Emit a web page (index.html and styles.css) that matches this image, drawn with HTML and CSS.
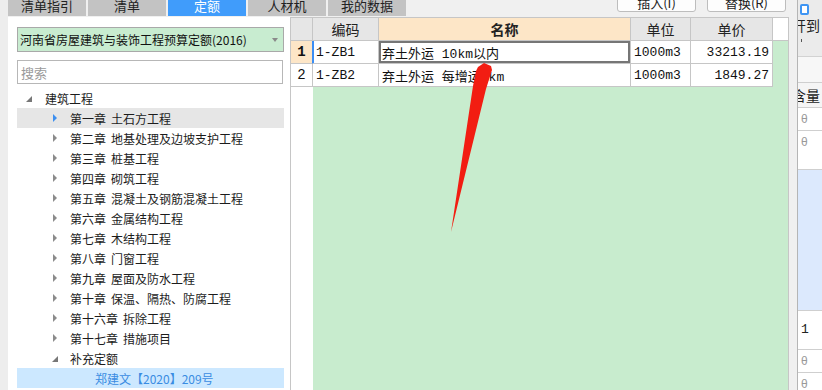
FILE: index.html
```html
<!DOCTYPE html>
<html lang="zh-CN">
<head>
    <meta charset="UTF-8">
    <meta name="viewport" content="width=device-width, initial-scale=1.0">
    <title>定额</title>
    <link rel="stylesheet" href="styles.css">
</head>
<body>

<div class="app">
    <div class="edge"></div>
    <div class="center">
        <div class="topbar">
            <div class="tabs">
                <div class="tab">清单指引</div>
                <div class="tab">清单</div>
                <div class="tab active">定额</div>
                <div class="tab">人材机</div>
                <div class="tab">我的数据</div>
            </div>
            <div class="actions">
                <button class="btn">插入(I)</button>
                <button class="btn">替换(R)</button>
            </div>
        </div>
        <div class="body">
            <div class="left-panel">
                <div class="select">
                    <span>河南省房屋建筑与装饰工程预算定额(2016)</span>
                    <span class="caret"></span>
                </div>
                <input class="search" type="text" placeholder="搜索">
                <ul class="tree">
                    <li class="lvl0"><i class="tri open"></i>建筑工程</li>
                    <li class="lvl1 sel"><i class="tri blue"></i><span class="no">第一章</span>土石方工程</li>
                    <li class="lvl1"><i class="tri"></i><span class="no">第二章</span>地基处理及边坡支护工程</li>
                    <li class="lvl1"><i class="tri"></i><span class="no">第三章</span>桩基工程</li>
                    <li class="lvl1"><i class="tri"></i><span class="no">第四章</span>砌筑工程</li>
                    <li class="lvl1"><i class="tri"></i><span class="no">第五章</span>混凝土及钢筋混凝土工程</li>
                    <li class="lvl1"><i class="tri"></i><span class="no">第六章</span>金属结构工程</li>
                    <li class="lvl1"><i class="tri"></i><span class="no">第七章</span>木结构工程</li>
                    <li class="lvl1"><i class="tri"></i><span class="no">第八章</span>门窗工程</li>
                    <li class="lvl1"><i class="tri"></i><span class="no">第九章</span>屋面及防水工程</li>
                    <li class="lvl1"><i class="tri"></i><span class="no">第十章</span>保温、隔热、防腐工程</li>
                    <li class="lvl1"><i class="tri"></i><span class="no">第十六章</span>拆除工程</li>
                    <li class="lvl1"><i class="tri"></i><span class="no">第十七章</span>措施项目</li>
                    <li class="lvl1"><i class="tri open"></i>补充定额</li>
                    <li class="lvl2 cur">郑建文【2020】209号</li>
                </ul>
            </div>

            <div class="grid">
                <table>
                    <thead>
                        <tr>
                            <th class="c-no"></th>
                            <th class="c-code">编码</th>
                            <th class="c-name hl">名称</th>
                            <th class="c-unit">单位</th>
                            <th class="c-price">单价</th>
                            <th class="c-end"></th>
                        </tr>
                    </thead>
                    <tbody>
                        <tr>
                            <td class="c-no hl active-row">1</td>
                            <td class="focus">1-ZB1</td>
                            <td class="picked">弃土外运 10km以内</td>
                            <td>1000m3</td>
                            <td class="num">33213.19</td>
                            <td class="c-end"></td>
                        </tr>
                        <tr>
                            <td class="c-no">2</td>
                            <td>1-ZB2</td>
                            <td>弃土外运 每增运1km</td>
                            <td>1000m3</td>
                            <td class="num">1849.27</td>
                            <td class="c-end"></td>
                        </tr>
                    </tbody>
                </table>
                <div class="filler">
                    <div class="gutter"></div>
                    <div class="blank"></div>
                </div>
            </div>
            <div class="splitter"></div>
        </div>
    </div>

    <div class="side">
        <div class="side-top">
            <span class="side-icon"></span>
            <span class="side-label">开到</span>
            <span class="side-tick"></span>
        </div>
        <div class="side-row h26"></div>
        <div class="side-row head"><span class="cut">含量</span></div>
        <div class="side-row h23 theta">θ</div>
        <div class="side-row h39 theta">θ</div>
        <div class="side-row h141 blue"></div>
        <div class="side-row h39 one">1</div>
        <div class="side-row h23 theta">θ</div>
        <div class="side-row h23 theta">θ</div>
    </div>

    <svg class="arrow" width="822" height="390" viewBox="0 0 822 390">
        <polygon points="478,67 484,63 491,66 492,70 486,89 451,232 473,86 476,71" fill="#f21d12"/>
    </svg>
</div>

</body>
</html>
```

FILE: styles.css
```css
body {
    margin: 0;
    padding: 0;
    font-family: "Noto Sans CJK SC", "Noto Sans", sans-serif;
    font-size: 12px;
    color: #1f1f1f;
    background-color: #f0f0f0;
    overflow: hidden;
}
.app {
    display: flex;
    height: 390px;
    position: relative;
}
.edge {
    width: 8px;
    background-color: #ededed;
}
.center {
    width: 789px;
    display: flex;
    flex-direction: column;
}

/* top bar */
.topbar {
    height: 17px;
    display: flex;
    background-color: #f0f0f0;
}
.tabs {
    display: flex;
    gap: 2px;
    height: 16px;
}
.tab {
    width: 78px;
    height: 16px;
    background-color: #c3c3c3;
    text-align: center;
    font-size: 13px;
    line-height: 11px;
    color: #222;
    overflow: hidden;
}
.tab.active {
    background-color: #409cfb;
    color: #fff;
}
.actions {
    margin-left: auto;
    padding-right: 11px;
    display: flex;
    gap: 11px;
    align-items: flex-start;
}
.btn {
    width: 79px;
    height: 20px;
    margin-top: -8px;
    padding: 0;
    border: 1px solid #bdbdbd;
    border-radius: 3px;
    background-color: #fdfdfd;
    font-family: inherit;
    font-size: 13px;
    line-height: 13px;
    color: #222;
}

.body {
    flex: 1;
    display: flex;
}

/* left panel */
.left-panel {
    width: 282px;
    box-sizing: border-box;
    padding: 10px 6px 0 9px;
    background-color: #fff;
}
.select {
    height: 25px;
    box-sizing: border-box;
    border: 1px solid #a9a9a9;
    background-color: #c8ecd0;
    display: flex;
    align-items: center;
    justify-content: space-between;
    padding: 0 5px 0 2px;
    font-size: 12px;
    color: #111;
}
.caret {
    width: 0;
    height: 0;
    border-left: 3px solid transparent;
    border-right: 3px solid transparent;
    border-top: 4px solid #8a8a8a;
}
.search {
    display: block;
    margin-top: 8px;
    width: 266px;
    height: 24px;
    box-sizing: border-box;
    border: 1px solid #b7b7b7;
    padding: 0 3px;
    font-family: inherit;
    font-size: 13px;
    outline: none;
}
.search::placeholder {
    color: #9a9a9a;
}
.tree {
    list-style: none;
    margin: 4px 0 0;
    padding: 0;
}
.tree li {
    height: 20px;
    display: flex;
    align-items: center;
    font-size: 12px;
    color: #1c1c1c;
    white-space: nowrap;
}
.tree .lvl0 {
    padding-left: 9px;
}
.tree .lvl1 {
    padding-left: 35px;
}
.tree .lvl2 {
    padding-left: 78px;
}
.tree .lvl0 .tri {
    width: 19px;
}
.tree .lvl1 .tri {
    width: 18px;
}
.tri {
    display: block;
    height: 20px;
    position: relative;
}
.tri::before {
    content: "";
    position: absolute;
    left: 1px;
    top: 6px;
    border-left: 4px solid #8c8c8c;
    border-top: 4px solid transparent;
    border-bottom: 4px solid transparent;
}
.tri.blue::before {
    border-left-color: #3d8ff0;
}
.tri.open::before {
    left: 0;
    top: 8px;
    border-left: 6px solid transparent;
    border-top: 0;
    border-bottom: 6px solid #777;
}
.tree .no {
    margin-right: 5px;
}
.tree .sel {
    background-color: #e6e6e6;
}
.tree .cur {
    background-color: #cce8ff;
    color: #3a8ce2;
}

/* grid */
.grid {
    width: 499px;
    box-sizing: border-box;
    border-left: 1px solid #c6c6c6;
    border-right: 1px solid #c6c6c6;
    display: flex;
    flex-direction: column;
    background-color: #fff;
}
.grid table {
    border-collapse: separate;
    border-spacing: 0;
    table-layout: fixed;
    width: 497px;
}
.grid th,
.grid td {
    box-sizing: border-box;
    border-right: 1px solid #c6c6c6;
    border-bottom: 1px solid #c6c6c6;
    padding: 0 3px;
    overflow: hidden;
    white-space: nowrap;
}
.grid th {
    height: 24px;
    border-top: 1px solid #c6c6c6;
    background-color: #e6e6e6;
    font-size: 14px;
    font-weight: normal;
    color: #222;
}
.grid th.c-no { width: 22px; }
.grid th.c-code { width: 66px; }
.grid th.c-name { width: 252px; font-weight: bold; }
.grid th.c-unit { width: 60px; }
.grid th.c-price { width: 82px; }
.grid th.c-end {
    width: 15px;
    background-color: #fff;
    border-right: none;
}
.grid td {
    height: 23px;
    font-family: "Liberation Mono", "Noto Sans CJK SC", monospace;
    font-size: 13px;
    color: #111;
    background-color: #fff;
}
.grid td.c-no {
    text-align: center;
    padding: 0;
    font-size: 14px;
}
.grid .hl {
    background-color: #fde6c7;
}
.grid td.active-row {
    font-weight: bold;
    border-right-color: #3b8ef5;
}
.grid td.focus {
    box-shadow: inset 1px 0 0 #3b8ef5;
}
.grid td.picked {
    box-shadow: inset 0 0 0 2px #767676;
}
.grid td.num {
    text-align: right;
}
.grid td.c-end {
    background-color: #c8ecce;
    border-right: none;
    border-bottom: none;
}
.filler {
    flex: 1;
    display: flex;
}
.gutter {
    width: 22px;
    background-color: #fff;
}
.blank {
    flex: 1;
    background-color: #c8ecce;
}
.splitter {
    width: 8px;
    background-color: #f0f0f0;
}

/* right panel */
.side {
    width: 25px;
    box-sizing: border-box;
    border-left: 1px solid #b5b5b5;
    background-color: #fff;
    overflow: hidden;
}
.side-top {
    height: 57px;
    box-sizing: border-box;
    border-bottom: 1px solid #d2d2d2;
    background-color: #ebebeb;
    position: relative;
    overflow: hidden;
}
.side-icon {
    position: absolute;
    left: 2px;
    top: 4px;
    width: 5px;
    height: 7px;
    border: 2px solid #3f95f3;
    border-radius: 2px;
    background-color: #fff;
}
.side-label {
    position: absolute;
    left: -6px;
    top: 16px;
    font-size: 14px;
    line-height: 18px;
    color: #222;
    white-space: nowrap;
}
.side-tick {
    position: absolute;
    left: 3px;
    top: 39px;
    width: 1px;
    height: 3px;
    background-color: #555;
}
.side-row {
    box-sizing: border-box;
    border-bottom: 1px solid #cfcfcf;
    padding-left: 3px;
    color: #999;
    font-size: 12px;
    white-space: nowrap;
}
.side-row.h26 {
    height: 26px;
    background-color: #f7f7f7;
}
.side-row.head {
    height: 25px;
    line-height: 24px;
    padding-left: 0;
    font-size: 14px;
    color: #222;
    background-color: #f5f5f5;
}
.side-row .cut {
    margin-left: -6px;
}
.side-row.theta {
    line-height: 22px;
    font-family: "Liberation Sans", sans-serif;
}
.side-row.h23 { height: 23px; }
.side-row.h39 { height: 39px; }
.side-row.h141 {
    height: 141px;
}
.side-row.blue {
    background-color: #dce9fd;
}
.side-row.one {
    line-height: 38px;
    color: #222;
    font-size: 13px;
    font-family: "Liberation Mono", monospace;
}

.arrow {
    position: absolute;
    left: 0;
    top: 0;
    pointer-events: none;
}
```
